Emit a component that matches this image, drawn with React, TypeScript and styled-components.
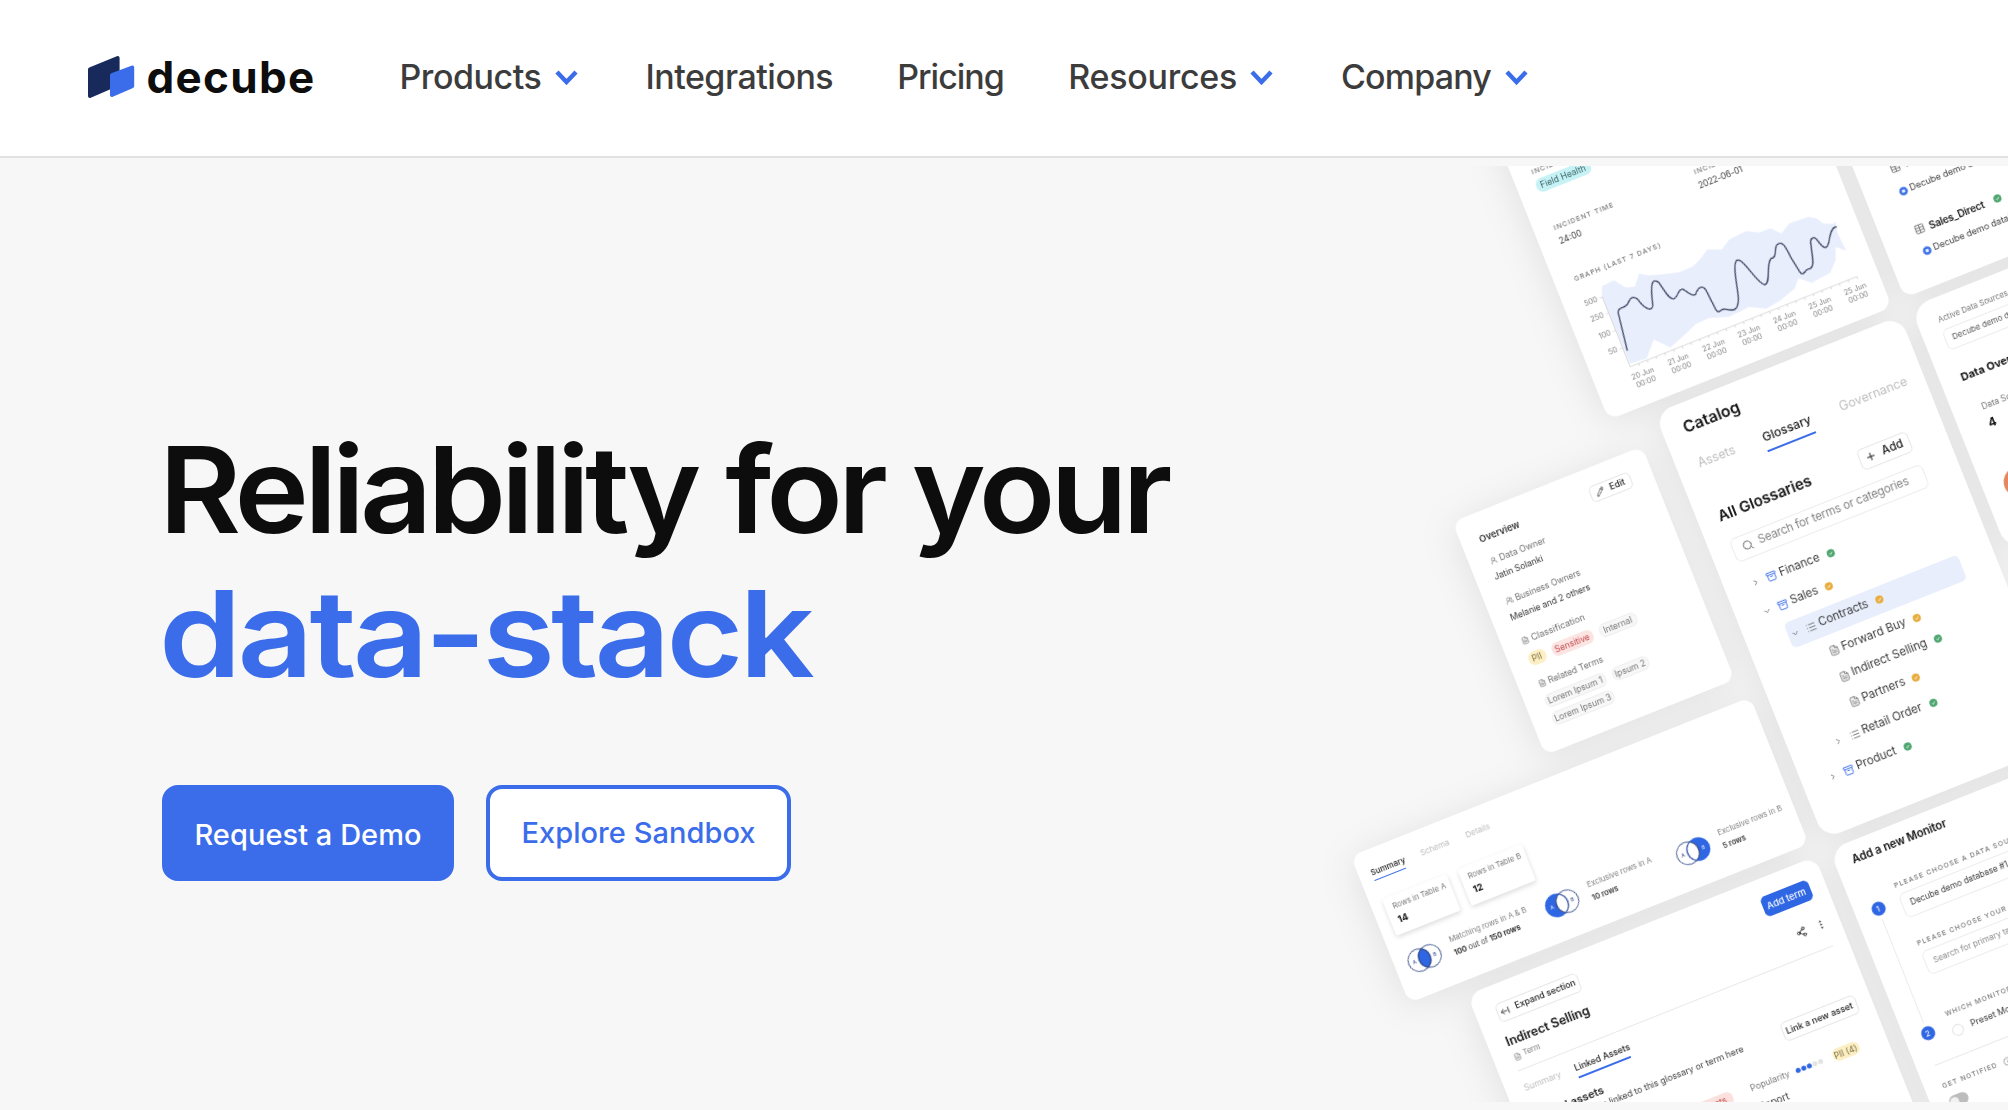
import React from "react";
import styled, { createGlobalStyle, css } from "styled-components";
import {
  Archive,
  ArrowLeftFromLine,
  ChevronDown,
  ChevronRight,
  FileText,
  Info,
  List,
  MoreVertical,
  Pencil,
  Plus,
  Search,
  Share2,
  Table,
  UserRound,
  UsersRound,
} from "lucide-react";

const BLUE = "#3b6dea";
const TILT = 21.7;

const GlobalStyle = createGlobalStyle`
  *, *::before, *::after { box-sizing: border-box; }
  body {
    margin: 0;
    background: #f7f7f7;
    font-family: Inter, "Liberation Sans", sans-serif;
    overflow: hidden;
  }
`;

/* ---------- page ---------- */

const Page = styled.div`
  width: 2008px;
  height: 1110px;
  overflow: hidden;
  background: #f7f7f7;
`;

const Header = styled.header`
  display: flex;
  align-items: center;
  height: 158px;
  padding: 0 0 2px 87px;
  background: #fff;
  border-bottom: 2px solid #e2e2e2;
`;

const Brand = styled.a`
  display: flex;
  align-items: center;
  gap: 11.5px;
  width: 312.5px;
`;

const BrandName = styled.span`
  font-size: 44px;
  line-height: 44px;
  font-weight: 700;
  letter-spacing: 1.3px;
  color: #0d0d0d;
`;

const Nav = styled.nav`
  display: flex;
  align-items: center;
`;

const NavItem = styled.a<{ $ls: number; $gap?: number }>`
  display: flex;
  align-items: center;
  gap: 13.5px;
  margin-right: ${(p) => p.$gap ?? 0}px;
  font-size: 34px;
  line-height: 40px;
  font-weight: 500;
  letter-spacing: ${(p) => p.$ls}px;
  color: #3c3c3c;
`;

const Hero = styled.main`
  display: grid;
  grid-template-columns: 1300px 708px;
  height: 952px;
`;

const Pitch = styled.section`
  padding: 260px 0 0 162px;
`;

const Headline = styled.h1`
  margin: 0 0 0 -3.5px;
  font-size: 120px;
  line-height: 144px;
  font-weight: 600;
  white-space: nowrap;
  color: #0d0d0d;
`;

const HeadLine = styled.span<{ $stretch: number; $ls: number; $accent?: boolean }>`
  display: block;
  width: max-content;
  letter-spacing: ${(p) => p.$ls}px;
  word-spacing: ${(p) => (p.$accent ? 0 : 2)}px;
  transform: scaleX(${(p) => p.$stretch});
  transform-origin: 0 0;
  color: ${(p) => (p.$accent ? BLUE : "inherit")};
`;

const Actions = styled.div`
  display: flex;
  gap: 32px;
  margin-top: 79px;
`;

const Cta = styled.button<{ $outline?: boolean }>`
  width: ${(p) => (p.$outline ? 305 : 292)}px;
  height: 96px;
  padding: ${(p) => (p.$outline ? "0 0 1px" : "3px 0 0")};
  border: 4px solid ${BLUE};
  border-radius: 16px;
  background: ${(p) => (p.$outline ? "#fff" : BLUE)};
  color: ${(p) => (p.$outline ? BLUE : "#fff")};
  font: 500 29px/36px Inter, "Liberation Sans", sans-serif;
  letter-spacing: 0.05px;
  white-space: nowrap;
`;

/* ---------- tilted collage ---------- */

const Stage = styled.section`
  position: relative;
  width: 708px;
  height: 936px;
  margin-top: 8px;
  overflow: hidden;
`;

const Board = styled.div`
  position: absolute;
  left: 0;
  top: 0;
  width: 1px;
  height: 1px;
  transform: rotate(-${TILT}deg);
  transform-origin: 0 0;
  filter: drop-shadow(-3px 4px 18px rgba(0, 0, 0, 0.085));
`;

const Card = styled.article<{ $x: number; $y: number; $w: number; $h: number; $pad: string; $r?: number }>`
  position: absolute;
  left: ${(p) => p.$x}px;
  top: ${(p) => p.$y}px;
  width: ${(p) => p.$w}px;
  height: ${(p) => p.$h}px;
  padding: ${(p) => p.$pad};
  border-radius: ${(p) => p.$r ?? 14}px;
  background: #fff;
  overflow: hidden;
`;

const Row = styled.div<{ $h: number; $mt?: number; $ml?: number; $gap?: number; $w?: number; $justify?: string; $align?: string }>`
  display: flex;
  align-items: ${(p) => p.$align ?? "center"};
  justify-content: ${(p) => p.$justify ?? "flex-start"};
  gap: ${(p) => p.$gap ?? 0}px;
  height: ${(p) => p.$h}px;
  margin-top: ${(p) => p.$mt ?? 0}px;
  margin-left: ${(p) => p.$ml ?? 0}px;
  ${(p) => p.$w && css`width: ${p.$w}px;`}
`;

const Text = styled.span<{ $s: number; $c?: string; $b?: number; $ls?: number; $w?: number }>`
  font-size: ${(p) => p.$s}px;
  line-height: 1.2;
  font-weight: ${(p) => p.$b ?? 400};
  color: ${(p) => p.$c ?? "#3c3c3c"};
  letter-spacing: ${(p) => p.$ls ?? 0}px;
  white-space: nowrap;
  flex: none;
  ${(p) => p.$w && css`width: ${p.$w}px;`}
`;

const Caps = styled(Text)`
  text-transform: uppercase;
  letter-spacing: ${(p) => p.$ls ?? 1.05}px;
  color: #777;
  font-weight: 500;
`;

const Tag = styled.span<{ $bg: string; $c: string; $line?: string; $w: number; $h?: number }>`
  display: flex;
  align-items: center;
  justify-content: center;
  flex: none;
  width: ${(p) => p.$w}px;
  height: ${(p) => p.$h ?? 14}px;
  border-radius: 6px;
  border: 1px solid ${(p) => p.$line ?? p.$bg};
  background: ${(p) => p.$bg};
  color: ${(p) => p.$c};
  font-size: 8.6px;
  line-height: 10px;
  white-space: nowrap;
`;

const MiniButton = styled.span<{ $w: number; $h: number; $s: number; $solid?: boolean }>`
  display: flex;
  align-items: center;
  justify-content: center;
  gap: 6px;
  flex: none;
  width: ${(p) => p.$w}px;
  height: ${(p) => p.$h}px;
  border-radius: 5px;
  border: 1px solid ${(p) => (p.$solid ? "#2f66e3" : "#e6e6e6")};
  background: ${(p) => (p.$solid ? "#2f66e3" : "#fff")};
  color: ${(p) => (p.$solid ? "#fff" : "#222")};
  font-size: ${(p) => p.$s}px;
  line-height: 1.2;
  font-weight: 500;
  white-space: nowrap;
`;

const Tabs = styled.div<{ $gap: number; $mt: number; $ml?: number }>`
  display: flex;
  gap: ${(p) => p.$gap}px;
  margin-top: ${(p) => p.$mt}px;
  margin-left: ${(p) => p.$ml ?? 0}px;
`;

const Tab = styled.span<{ $s: number; $lh: number; $pb: number; $w: number; $on?: boolean }>`
  width: ${(p) => p.$w}px;
  font-size: ${(p) => p.$s}px;
  line-height: ${(p) => p.$lh}px;
  padding-bottom: ${(p) => p.$pb}px;
  border-bottom: 2px solid ${(p) => (p.$on ? BLUE : "transparent")};
  color: ${(p) => (p.$on ? "#1c1c1c" : "#bdbdbd")};
  font-weight: ${(p) => (p.$on ? 500 : 400)};
  white-space: nowrap;
`;

const ThinTab = styled(Tab)`
  border-bottom-width: 1px;
`;

const Field = styled.div<{ $w: number; $h: number; $mt: number; $ml?: number; $pl: number }>`
  display: flex;
  align-items: center;
  gap: 6px;
  width: ${(p) => p.$w}px;
  height: ${(p) => p.$h}px;
  margin-top: ${(p) => p.$mt}px;
  margin-left: ${(p) => p.$ml ?? 0}px;
  padding-left: ${(p) => p.$pl}px;
  border: 1px solid #ececec;
  border-radius: 6px;
`;

const Rule = styled.div<{ $w: number; $mt: number }>`
  width: ${(p) => p.$w}px;
  height: 1px;
  margin-top: ${(p) => p.$mt}px;
  background: #e9e9e9;
`;

const TreeRow = styled.div<{ $ml: number; $mt: number; $on?: boolean }>`
  display: flex;
  align-items: center;
  width: ${(p) => 208 - p.$ml}px;
  height: 27px;
  margin-top: ${(p) => p.$mt}px;
  margin-left: ${(p) => p.$ml}px;
  padding-left: 1px;
  border-radius: 5px;
  background: ${(p) => (p.$on ? "#e8eefc" : "transparent")};
`;

const TreeLabel = styled(Text)`
  margin-right: 8px;
`;

const Slot = styled.span<{ $w: number; $mr: number }>`
  display: flex;
  justify-content: center;
  flex: none;
  width: ${(p) => p.$w}px;
  margin-right: ${(p) => p.$mr}px;
  color: #444;
`;

const StatTile = styled.div`
  display: flex;
  flex-direction: column;
  gap: 4px;
  width: 69px;
  height: 39px;
  padding: 5.5px 0 0 8px;
  background: #fff;
  border-radius: 2px;
  box-shadow: 0 2px 5px rgba(0, 0, 0, 0.14);
`;

const VennRow = styled.div`
  display: grid;
  grid-template-columns: 148.5px 140.5px 130px;
  height: 24px;
  margin: 18.5px 0 0;
`;

const Stack = styled.div<{ $gap?: number }>`
  display: flex;
  flex-direction: column;
  gap: ${(p) => p.$gap ?? 0}px;
`;

const Dots = styled.span`
  display: flex;
  gap: 1px;
  margin: 0 11px 0 6px;
`;

const Dot = styled.i<{ $on: boolean }>`
  width: 5px;
  height: 5px;
  border-radius: 50%;
  background: ${(p) => (p.$on ? "#2f66e3" : "#e3e3e3")};
`;

const Steps = styled.div`
  display: grid;
  grid-template-columns: 30.5px 1fr;
  margin: 28.7px 0 0 -1px;
`;

const Rail = styled.div`
  display: flex;
  flex-direction: column;
  align-items: center;
  gap: 4px;
  width: 14px;
  height: 159.6px;
  padding-top: 12px;
`;

const RailLine = styled.span`
  flex: 1;
  width: 1px;
  background: #ececec;
`;

const StepBadge = styled.span`
  width: 14px;
  height: 14px;
  border-radius: 50%;
  background: #2f66e3;
  color: #fff;
  font-size: 8px;
  line-height: 14px;
  text-align: center;
`;

const Radio = styled.span`
  width: 12px;
  height: 12px;
  border-radius: 50%;
  border: 1px solid #e0e0e0;
`;

const Toggle = styled.span`
  display: block;
  width: 20px;
  height: 12px;
  margin-top: 8px;
  padding: 1.5px;
  border-radius: 6px;
  background: #bcbcbc;
  &::after {
    content: "";
    display: block;
    width: 9px;
    height: 9px;
    border-radius: 50%;
    background: #f2f2f2;
  }
`;

const Donut = styled.span`
  display: block;
  width: 30px;
  height: 30px;
  margin-top: 44px;
  border-radius: 50%;
  background: #e2875f;
`;

const ChartBox = styled.svg`
  display: block;
  overflow: visible;
`;

/* ---------- drawings ---------- */

const Logo = () => (
  <svg width="48" height="44" viewBox="87 55 48 44" strokeLinejoin="round" strokeWidth="4">
    <path d="M90 69.4 L117.6 58 V84 L90 96Z" fill="#182a5c" stroke="#182a5c" />
    <path d="M112 75.2 L132.2 67.5 V86.2 L112 95Z" fill={BLUE} stroke={BLUE} />
  </svg>
);

const Caret = () => (
  <svg width="23" height="15" viewBox="0 0 23 15" fill="none">
    <path d="M2 2 L11.5 12 L21 2" stroke={BLUE} strokeWidth="4.4" />
  </svg>
);

const Check = ({ color = "#4ea56f", size = 8 }: { color?: string; size?: number }) => (
  <svg width={size} height={size} viewBox="0 0 8 8" fill="none">
    <circle cx="4" cy="4" r="4" fill={color} />
    <path d="M2.4 4.1 L3.6 5.2 L5.6 3" stroke="#fff" strokeWidth="0.9" />
  </svg>
);

const Source = () => (
  <svg width="9" height="9" viewBox="0 0 9 9">
    <circle cx="4.5" cy="4.5" r="4.3" fill="#3f73e6" />
    <rect x="2.8" y="3" width="3.4" height="3" rx="1" fill="#e3ebff" />
  </svg>
);

const Venn = ({ mode }: { mode: "both" | "a" | "b" }) => {
  const lens = "M18 1.8 A11.6 11.6 0 0 1 18 22.2 A11.6 11.6 0 0 1 18 1.8Z";
  const fill = "#2f66e3";
  return (
    <svg width="36" height="24" viewBox="0 0 36 24">
      <circle cx="12.3" cy="12" r="11.6" fill={mode === "a" ? fill : "#fff"} />
      <circle cx="23.7" cy="12" r="11.6" fill={mode === "b" ? fill : "#fff"} />
      <path d={lens} fill={mode === "both" ? fill : "#fff"} />
      <circle cx="12.3" cy="12" r="11.4" fill="none" stroke={mode === "a" ? fill : "#324a86"} strokeWidth="0.9" />
      <circle cx="23.7" cy="12" r="11.4" fill="none" stroke={mode === "b" ? fill : "#324a86"} strokeWidth="0.9" />
      <path d={lens} fill="none" stroke="#324a86" strokeWidth="0.9" />
      <text x="7" y="14" fontSize="5" fontWeight="600" textAnchor="middle" fill={mode === "a" ? "#c7d6fb" : "#5a6fa8"}>A</text>
      <text x="29" y="14" fontSize="5" fontWeight="600" textAnchor="middle" fill={mode === "b" ? "#c7d6fb" : "#5a6fa8"}>B</text>
    </svg>
  );
};

const BAND =
  "M362 440 L362 408 L398 390 L432 412 L460 410 L472 370 L500 376 L545 372 L590 366 L630 350 L652 328 L675 298 L718 298 L740 268 L790 243 L830 247 L862 234 L895 250 L918 220 L975 200 L1000 205 L1020 220 L1048 222 L1055 214 L1062 250 L1088 302 L1056 290 L1056 330 L1040 368 L985 398 L945 384 L935 415 L890 452 L850 476 L800 470 L740 500 L680 504 L640 522 L610 552 L565 592 L516 568 L495 625 L445 640 Z";
const SERIES =
  "M437 600 L410 487 C410 466 433 478 440 458 C446 441 455 437 468 447 C488 476 512 487 513 465 C505 400 510 384 530 396 C550 424 560 446 573 446 C590 446 584 416 602 417 C618 425 628 440 640 433 C648 408 660 406 670 418 L700 478 C712 495 712 474 728 477 C745 480 766 488 767 450 C770 430 742 325 768 330 C785 330 820 396 845 404 C865 400 848 345 864 325 C882 322 874 300 880 286 C900 264 912 302 925 325 L950 366 C962 382 965 355 978 356 C996 350 986 320 983 285 C978 262 992 256 1003 272 C1022 298 1030 298 1036 275 C1040 248 1045 230 1058 230";

const IncidentChart = () => {
  const yTicks: [string, number][] = [["500", 235.4], ["250", 252.6], ["100", 271.4], ["50", 290]];
  const days = ["20", "21", "22", "23", "24", "25", "25"];
  return (
    <ChartBox width="286" height="130" viewBox="212 211.8 286 130">
      <g transform={`rotate(${TILT}) translate(180 -16) scale(0.3367 0.3333)`} fill="none">
        <path d={BAND} fill="#e8eefc" />
        <path d={SERIES} stroke="#414a66" strokeWidth="4" strokeLinecap="round" strokeLinejoin="round" />
      </g>
      <path d="M232.5 233 V308.5 H476.5" fill="none" stroke="#d3d3d3" strokeWidth="0.8" />
      {yTicks.map(([t, y]) => (
        <React.Fragment key={t}>
          <path d={`M229.5 ${y - 2} h3`} stroke="#d3d3d3" strokeWidth="0.8" />
          <text x="227" y={y} fontSize="7.4" textAnchor="end" fill="#808080">{t}</text>
        </React.Fragment>
      ))}
      {Array.from({ length: 26 }, (_, i) => (
        <path key={i} d={`M${241.5 + i * 9.4} 308.5 v2.4`} stroke="#cfcfcf" strokeWidth="0.8" />
      ))}
      {days.map((d, i) => (
        <React.Fragment key={i}>
          <text x={241.8 + i * 38.1} y="321.6" fontSize="7.2" textAnchor="middle" fill="#808080">{d} Jun</text>
          <text x={241.8 + i * 38.1} y="330.8" fontSize="7.4" textAnchor="middle" fill="#808080">00:00</text>
        </React.Fragment>
      ))}
    </ChartBox>
  );
};

/* ---------- cards ---------- */

const IncidentCard = () => (
  <Card $x={193} $y={40} $w={304.5} $h={310} $pad="47px 0 0 19px" $r={12}>
    <Row $h={10} $ml={1}><Caps $s={6.8}>Incident type</Caps></Row>
    <Row $h={14} $mt={3} $ml={-0.5}><Tag $w={58} $bg="#c6f2f5" $c="#3b6468">Field Health</Tag></Row>
    <Row $h={10} $mt={33.5} $ml={1}>
      <Caps $s={6.8} $w={151}>Incident time</Caps>
      <Caps $s={6.8}>Incident date</Caps>
    </Row>
    <Row $h={12} $mt={2.6} $ml={1}>
      <Text $s={8.6} $w={150}>24:00</Text>
      <Text $s={8.6} $ls={-0.2}>2022-06-01</Text>
    </Row>
    <Row $h={10} $mt={29.7} $ml={1}><Caps $s={6.8}>Graph (last 7 days)</Caps></Row>
    <IncidentChart />
  </Card>
);

const TablesCard = () => (
  <Card $x={512.5} $y={100} $w={200} $h={245.5} $pad="114px 0 0 34px" $r={12}>
    <Row $h={14} $gap={5}><Table size={11} color="#777" /><Text $s={10.3} $b={600} $c="#222">Sales_Core</Text></Row>
    <Row $h={12} $mt={12} $gap={3}><Source /><Text $s={9}>Decube demo database</Text></Row>
    <Row $h={14} $mt={28.7} $gap={5}>
      <Table size={11} color="#777" />
      <Text $s={10.2} $b={600} $c="#222" $ls={-0.2}>Sales_Direct</Text>
      <Slot $w={20} $mr={0}><Check /></Slot>
    </Row>
    <Row $h={12} $mt={10} $gap={3}><Source /><Text $s={9}>Decube demo database</Text></Row>
  </Card>
);

const OverviewStatsCard = () => (
  <Card $x={515} $y={357} $w={200} $h={262} $pad="18px 0 0 21px" $r={20}>
    <Row $h={10}><Text $s={7.8} $c="#777">Active Data Sources</Text></Row>
    <Field $w={170} $h={22} $mt={5} $ml={-1} $pl={7}><Text $s={8.1} $c="#555">Decube demo database</Text></Field>
    <Row $h={14} $mt={23}><Text $s={11} $b={700} $c="#151515">Data Overview</Text></Row>
    <Row $h={10} $mt={22.5} $ml={8.5}><Text $s={8.4} $c="#777">Data Sources</Text></Row>
    <Row $h={12} $mt={6.5} $ml={8.5}><Text $s={12} $b={700} $c="#151515">4</Text></Row>
    <Donut />
  </Card>
);

const GREEN = "#4ea56f";
const AMBER = "#e8ac3c";

type Node = { label: string; kind: "box" | "list" | "doc"; ml: number; mt: number; open?: boolean; color: string; on?: boolean };

const TREE: Node[] = [
  { label: "Finance", kind: "box", ml: 3, mt: 11.5, open: false, color: GREEN },
  { label: "Sales", kind: "box", ml: 3, mt: 3.5, open: true, color: AMBER },
  { label: "Contracts", kind: "list", ml: 21, mt: 4, open: true, color: AMBER, on: true },
  { label: "Forward Buy", kind: "doc", ml: 33.5, mt: 3.5, color: AMBER },
  { label: "Indirect Selling", kind: "doc", ml: 33.5, mt: 0.5, color: GREEN },
  { label: "Partners", kind: "doc", ml: 33.5, mt: 0.5, color: AMBER },
  { label: "Retail Order", kind: "list", ml: 21.5, mt: 3.5, open: false, color: GREEN },
  { label: "Product", kind: "box", ml: 3, mt: 4, open: false, color: GREEN },
];

const kindIcon = {
  box: <Archive size={11} color={BLUE} />,
  list: <List size={11} color="#777" />,
  doc: <FileText size={11} color="#777" />,
};

const CatalogCard = () => (
  <Card $x={238} $y={360.5} $w={264} $h={458} $pad="14.6px 0 0 21px" $r={18}>
    <Row $h={20} $ml={0.5}><Text $s={16} $b={600} $c="#151515">Catalog</Text></Row>
    <Tabs $gap={31.3} $mt={20.5} $ml={1}>
      <Tab $s={12.4} $lh={16} $pb={5} $w={38}>Assets</Tab>
      <Tab $s={12.2} $lh={16} $pb={5} $w={51.5} $on>Glossary</Tab>
      <Tab $s={12.6} $lh={16} $pb={5} $w={72}>Governance</Tab>
    </Tabs>
    <Row $h={22} $mt={31.8} $w={205.5} $justify="space-between">
      <Text $s={15.2} $b={600} $c="#151515" $ls={-0.05}>All Glossaries</Text>
      <MiniButton $w={54} $h={22} $s={11.5}><Plus size={12} />Add</MiniButton>
    </Row>
    <Field $w={207} $h={25} $mt={13.5} $ml={0.5} $pl={9}>
      <Search size={12} color="#666" />
      <Text $s={11.6} $c="#858585" $ls={-0.2}>Search for terms or categories</Text>
    </Field>
    {TREE.map((n) => (
      <TreeRow key={n.label} $ml={n.ml} $mt={n.mt} $on={n.on}>
        <Slot $w={12} $mr={6}>
          {n.open === true && <ChevronDown size={9} />}
          {n.open === false && <ChevronRight size={9} />}
        </Slot>
        <Slot $w={11} $mr={3}>{kindIcon[n.kind]}</Slot>
        <TreeLabel $s={11.5}>{n.label}</TreeLabel>
        <Check color={n.color} />
      </TreeRow>
    ))}
  </Card>
);

const OverviewCard = () => (
  <Card $x={9.5} $y={387} $w={204.5} $h={251} $pad="17.5px 0 0 19px" $r={11}>
    <Row $h={17.6} $w={163} $justify="space-between">
      <Text $s={9.3} $b={600} $c="#333">Overview</Text>
      <MiniButton $w={44} $h={17} $s={8.8}><Pencil size={9} />Edit</MiniButton>
    </Row>
    <Row $h={12} $mt={10} $ml={1.5} $gap={2.5}><UserRound size={8} color="#777" /><Text $s={8.8} $c="#707070">Data Owner</Text></Row>
    <Row $h={12} $mt={4.6}><Text $s={8.7} $c="#333">Jatin Solanki</Text></Row>
    <Row $h={12} $mt={14.2} $ml={1.5} $gap={2.5}><UsersRound size={8} color="#777" /><Text $s={8.5} $c="#707070">Business Owners</Text></Row>
    <Row $h={12} $mt={4.8}><Text $s={8.6} $c="#333">Melanie and 2 others</Text></Row>
    <Row $h={12} $mt={14.5} $ml={1.5} $gap={2.5}><FileText size={8} color="#777" /><Text $s={9} $c="#707070">Classification</Text></Row>
    <Row $h={14} $mt={6.9} $ml={1} $gap={7}>
      <Tag $w={18} $bg="#fcefc3" $c="#7d7048">PII</Tag>
      <Tag $w={44} $bg="#fbe4e2" $c="#c4494c">Sensitive</Tag>
      <Tag $w={40} $bg="#f7f7f7" $line="#efefef" $c="#777">Internal</Tag>
    </Row>
    <Row $h={12} $mt={13.1} $ml={1.5} $gap={2.5}><FileText size={8} color="#777" /><Text $s={8.7} $c="#707070">Related Terms</Text></Row>
    <Row $h={14} $mt={6} $ml={1} $gap={7}>
      <Tag $w={65} $bg="#f7f7f7" $line="#efefef" $c="#777">Lorem Ipsum 1</Tag>
      <Tag $w={39} $bg="#f7f7f7" $line="#efefef" $c="#777">Ipsum 2</Tag>
    </Row>
    <Row $h={14} $mt={5.3} $ml={1}>
      <Tag $w={66} $bg="#f7f7f7" $line="#efefef" $c="#777">Lorem Ipsum 3</Tag>
    </Row>
  </Card>
);

const VennStat = ({ mode, label, children }: { mode: "both" | "a" | "b"; label: string; children: React.ReactNode }) => (
  <Row $h={24} $gap={12}>
    <Venn mode={mode} />
    <Stack $gap={4.6}>
      <Row $h={10}><Text $s={7.6} $c="#808080">{label}</Text></Row>
      <Row $h={10} $gap={2}>{children}</Row>
    </Stack>
  </Row>
);

const SummaryCard = () => (
  <Card $x={-208} $y={659.5} $w={429.5} $h={158} $pad="17.9px 0 0 12.5px" $r={11}>
    <Tabs $gap={18.6} $mt={0}>
      <ThinTab $s={8} $lh={12} $pb={1.4} $w={34.8} $on>Summary</ThinTab>
      <ThinTab $s={8} $lh={12} $pb={1.4} $w={30}>Schema</ThinTab>
      <ThinTab $s={8} $lh={12} $pb={1.4} $w={25}>Details</ThinTab>
    </Tabs>
    <Row $h={39} $mt={20.4} $gap={12}>
      <StatTile>
        <Row $h={10}><Text $s={7.6} $c="#777">Rows in Table A</Text></Row>
        <Row $h={10}><Text $s={9.5} $b={700} $c="#151515">14</Text></Row>
      </StatTile>
      <StatTile>
        <Row $h={10}><Text $s={7.6} $c="#777">Rows in Table B</Text></Row>
        <Row $h={10}><Text $s={9.5} $b={700} $c="#151515">12</Text></Row>
      </StatTile>
    </Row>
    <VennRow>
      <VennStat mode="both" label="Matching rows in A & B">
        <Text $s={7.5} $b={700} $c="#333">100</Text><Text $s={7.5}>out of</Text><Text $s={7.5} $b={700} $c="#333">150 rows</Text>
      </VennStat>
      <VennStat mode="a" label="Exclusive rows in A"><Text $s={7.5} $b={600} $c="#333">10 rows</Text></VennStat>
      <VennStat mode="b" label="Exclusive rows in B"><Text $s={7.5} $b={600} $c="#333">5 rows</Text></VennStat>
    </VennRow>
  </Card>
);

const TermCard = () => (
  <Card $x={-151.5} $y={832} $w={374} $h={330} $pad="18px 0 0 19px" $r={14}>
    <Row $h={21} $ml={2} $w={337} $justify="space-between">
      <MiniButton $w={88} $h={20} $s={8.8}><ArrowLeftFromLine size={10} />Expand section</MiniButton>
      <MiniButton $w={51} $h={21} $s={9.4} $solid>Add term</MiniButton>
    </Row>
    <Row $h={20} $mt={11.5} $w={341} $justify="space-between" $align="flex-start">
      <Row $h={16}><Text $s={12.6} $b={600} $c="#151515" $ls={-0.1}>Indirect Selling</Text></Row>
      <Row $h={11} $mt={9} $gap={10}><Share2 size={11} color="#222" /><MoreVertical size={11} color="#222" /></Row>
    </Row>
    <Row $h={10} $ml={1} $gap={3}><FileText size={8} color="#888" /><Text $s={7.4} $c="#777">Term</Text></Row>
    <Rule $w={339} $mt={8} />
    <Tabs $gap={16} $mt={12.4}>
      <Tab $s={8.7} $lh={12} $pb={3.6} $w={38}>Summary</Tab>
      <Tab $s={8.9} $lh={12} $pb={3.6} $w={56} $on>Linked Assets</Tab>
    </Tabs>
    <Row $h={29.5} $mt={12.6} $w={340} $justify="space-between" $align="flex-start">
      <Stack>
        <Row $h={14}><Text $s={11} $b={600} $c="#222">Linked assets</Text></Row>
        <Row $h={12} $w={218} $justify="flex-end"><Text $s={8.8}>Here are the assets linked to this glossary or term here</Text></Row>
      </Stack>
      <Row $h={19} $mt={10.5}><MiniButton $w={80} $h={20} $s={9}>Link a new asset</MiniButton></Row>
    </Row>
    <Row $h={14} $mt={24}>
      <Row $h={14} $w={190} $justify="flex-end"><Tag $w={40} $bg="#fbe0de" $c="#c4494c">Assets</Tag></Row>
      <Slot $w={20} $mr={0} />
      <Text $s={8.7} $c="#777" $w={42}>Popularity</Text>
      <Dots>{[1, 1, 1, 0, 0].map((d, i) => <Dot key={i} $on={!!d} />)}</Dots>
      <Tag $w={28} $h={13} $bg="#fcefc3" $c="#7d7048">PII (4)</Tag>
    </Row>
    <Row $h={12} $mt={6.4} $w={243} $justify="flex-end"><Text $s={10}>Report</Text></Row>
  </Card>
);

const MonitorCard = () => (
  <Card $x={238.5} $y={830.5} $w={320} $h={340} $pad="12px 0 0 18px" $r={18}>
    <Row $h={14}><Text $s={11.3} $b={600} $c="#151515" $ls={-0.1}>Add a new Monitor</Text></Row>
    <Steps>
      <Rail>
        <StepBadge>1</StepBadge>
        <RailLine />
        <StepBadge>2</StepBadge>
      </Rail>
      <Stack>
        <Row $h={8}><Caps $s={6.8}>Please choose a data source</Caps></Row>
        <Field $w={220} $h={26} $mt={5.2} $pl={8}><Text $s={8.3}>Decube demo database #1</Text></Field>
        <Row $h={8} $mt={22.8}><Caps $s={6.8}>Please choose your table</Caps></Row>
        <Field $w={220} $h={25} $mt={5.2} $pl={8}><Text $s={8.2} $c="#8b8b8b">Search for primary table</Text></Field>
        <Row $h={8} $mt={37.3}><Caps $s={6.8}>Which monitor</Caps></Row>
        <Row $h={12} $mt={8.9} $gap={8}><Radio /><Text $s={8.8}>Preset Monitor</Text></Row>
      </Stack>
    </Steps>
    <Rule $w={260} $mt={18.2} />
    <Row $h={8} $mt={18.6} $gap={6}><Caps $s={6.8}>Get notified</Caps><Info size={9} color="#888" /></Row>
    <Toggle />
  </Card>
);

export default function App() {
  return (
    <Page>
      <GlobalStyle />
      <Header>
        <Brand>
          <Logo />
          <BrandName>decube</BrandName>
        </Brand>
        <Nav>
          <NavItem $ls={-0.45} $gap={67.5}>Products <Caret /></NavItem>
          <NavItem $ls={-0.5} $gap={64}>Integrations</NavItem>
          <NavItem $ls={-1} $gap={64.5}>Pricing</NavItem>
          <NavItem $ls={-0.3} $gap={67.5}>Resources <Caret /></NavItem>
          <NavItem $ls={-0.8}>Company <Caret /></NavItem>
        </Nav>
      </Header>
      <Hero>
        <Pitch>
          <Headline>
            <HeadLine $stretch={1.05} $ls={-4.75}>Reliability for your</HeadLine>
            <HeadLine $stretch={1.1} $ls={-3.5} $accent>data-stack</HeadLine>
          </Headline>
          <Actions>
            <Cta>Request a Demo</Cta>
            <Cta $outline>Explore Sandbox</Cta>
          </Actions>
        </Pitch>
        <Stage>
          <Board>
            <IncidentCard />
            <TablesCard />
            <OverviewStatsCard />
            <CatalogCard />
            <OverviewCard />
            <SummaryCard />
            <TermCard />
            <MonitorCard />
          </Board>
        </Stage>
      </Hero>
    </Page>
  );
}
